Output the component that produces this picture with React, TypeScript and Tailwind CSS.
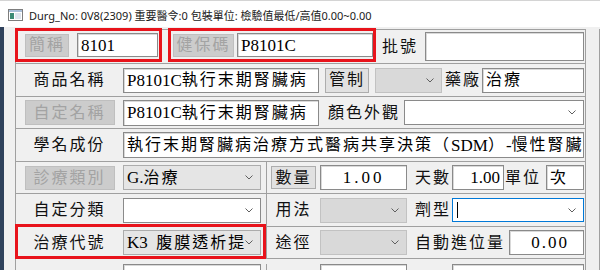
import React from 'react';

const CJK = /([\u2E80-\u9FFF\uF900-\uFAFF\uFF00-\uFFEF\u3000-\u303F]+)/;

// splits a string so CJK runs get the wide MingLiU-like pitch
function Txt({ s }: { s: string }) {
  const parts = s.split(CJK).filter(Boolean);
  return (
    <>
      {parts.map((p, i) =>
        CJK.test(p) ? (
          <span key={i} className="text-[16px] tracking-[2px]">{p}</span>
        ) : (
          <span key={i} className="text-[17px] whitespace-pre">{p}</span>
        )
      )}
    </>
  );
}

function Chevron() {
  return (
    <svg width="8" height="5" viewBox="0 0 8 5" className="shrink-0">
      <path d="M0.5 0.5 L4 4 L7.5 0.5" fill="none" stroke="#5f5f5f" strokeWidth="1" />
    </svg>
  );
}

function AppIcon() {
  return (
    <svg width="15" height="12" viewBox="0 0 15 12" className="shrink-0">
      <rect x="0.5" y="0.5" width="14" height="11" fill="#ffffff" stroke="#7d7d7d" />
      <rect x="1" y="1" width="13" height="2" fill="#a9bfd9" />
      <rect x="2" y="4" width="4" height="6" fill="#3b8b76" />
      <rect x="7" y="4" width="6" height="6" fill="#dde5ee" />
    </svg>
  );
}

function Label({ s, className = '' }: { s: string; className?: string }) {
  return <div className={`flex items-center whitespace-nowrap text-[#111] ${className}`}><Txt s={s} /></div>;
}

function Btn({ s, disabled = false, className = '' }: { s: string; disabled?: boolean; className?: string }) {
  return (
    <div
      className={`flex items-center justify-center border whitespace-nowrap ${
        disabled ? 'bg-[#cccccc] border-[#bfbfbf] text-[#a3a3a3]' : 'bg-[#e1e1e1] border-[#adadad] text-[#111]'
      } ${className}`}
    >
      <Txt s={s} />
    </div>
  );
}

function Input({ s = '', className = '' }: { s?: string; className?: string }) {
  return (
    <div
      className={`flex items-center bg-white border border-[#8a8a8a] shadow-[inset_1px_1px_0_#d9d9d9] px-[3px] overflow-hidden whitespace-nowrap ${className}`}
    >
      <Txt s={s} />
    </div>
  );
}

function Select({
  s = '',
  kind = 'white',
  className = '',
}: {
  s?: string;
  kind?: 'white' | 'gray' | 'disabled' | 'focus';
  className?: string;
}) {
  const look =
    kind === 'white'
      ? 'bg-white border-[#8a8a8a]'
      : kind === 'gray'
      ? 'bg-[#e5e5e5] border-[#acacac]'
      : kind === 'disabled'
      ? 'bg-[#d9d9d9] border-[#c2c2c2]'
      : 'bg-white border-[#0078d7]';
  return (
    <div className={`flex items-center border ${look} pl-[3px] pr-[7px] ${className}`}>
      <div className="flex-1 flex items-center overflow-hidden whitespace-nowrap">
        {kind === 'focus' ? <div className="w-px h-[16px] bg-black ml-[1px]" /> : <Txt s={s} />}
      </div>
      <Chevron />
    </div>
  );
}

const row = 'flex items-center border-b border-[#a0a0a0] shrink-0';
const redBox = 'border-[3px] border-[#e8131b]';

export default function App() {
  return (
    <div className="w-[600px] h-[270px] overflow-hidden bg-[#f0f0f0] font-['Liberation_Serif','Noto_Sans_CJK_TC',serif] text-black leading-none">
      {/* title bar */}
      <div className="h-[27px] bg-white border-t border-[#d4d4d4] flex items-center pl-[8px] pt-[2px] gap-[6px]">
        <AppIcon />
        <span className="font-['Noto_Sans','Noto_Sans_CJK_TC',sans-serif] text-[11px] text-[#1a1a1a] whitespace-nowrap">
          Durg_No: 0V8(2309) 重要醫令:0 包裝單位: 檢驗值最低/高值0.00~0.00
        </span>
      </div>

      <div className="flex h-[243px]">
        <div className="w-[15px] flex shrink-0">
          <div className="w-[4px] bg-[#2f425c]" />
        </div>

        <div className="w-[571px] shrink-0 mt-[2px] border-l border-r border-t border-[#a0a0a0] flex flex-col">
          {/* row 1 */}
          <div className={`${row} h-[34px]`}>
            <div className={`${redBox} self-start -mt-[2px] -ml-px w-[147px] h-[34px] flex items-center`}>
              <Btn s="簡稱" disabled className="ml-[7px] w-[44px] h-[23px]" />
              <Input s="8101" className="ml-[8px] w-[81px] h-[24px]" />
            </div>
            <div className={`${redBox} self-start -mt-[2px] ml-[6px] w-[208px] h-[34px] flex items-center`}>
              <Btn s="健保碼" disabled className="ml-[2px] w-[61px] h-[23px]" />
              <Input s="P8101C" className="ml-[3px] w-[136px] h-[24px]" />
            </div>
            <Label s="批號" className="ml-[6px] w-[43px]" />
            <Input className="w-[159px] h-[29px]" />
          </div>

          {/* row 2 */}
          <div className={`${row} h-[33px]`}>
            <Label s="商品名稱" className="w-[107px] justify-center" />
            <Input s="P8101C執行末期腎臟病" className="w-[196px] h-[25px]" />
            <Btn s="管制" className="ml-[6px] w-[44px] h-[25px]" />
            <Select kind="disabled" className="ml-[6px] w-[67px] h-[25px]" />
            <Label s="藥廠" className="ml-[3px] w-[37px]" />
            <Input s="治療" className="w-[102px] h-[25px]" />
          </div>

          {/* row 3 */}
          <div className={`${row} h-[32px]`}>
            <div className="w-[107px] flex justify-center">
              <Btn s="自定名稱" disabled className="w-[90px] h-[25px]" />
            </div>
            <Input s="P8101C執行末期腎臟病" className="w-[196px] h-[26px]" />
            <Label s="顏色外觀" className="ml-[9px] w-[76px]" />
            <Select className="w-[180px] h-[25px]" />
          </div>

          {/* row 4 */}
          <div className={`${row} h-[33px]`}>
            <Label s="學名成份" className="w-[107px] justify-center" />
            <Input s="執行末期腎臟病治療方式醫病共享決策（SDM）-慢性腎臟病" className="w-[461px] h-[26px]" />
          </div>

          {/* row 5 */}
          <div className={`${row} h-[32px]`}>
            <div className="w-[251px] h-full border-r border-[#a0a0a0] flex items-center">
              <div className="w-[107px] flex justify-center">
                <Btn s="診療類別" disabled className="w-[90px] h-[24px]" />
              </div>
              <Select s="G.治療" kind="gray" className="w-[138px] h-[25px]" />
            </div>
            <div className="w-[53px] flex justify-center">
              <Btn s="數量" className="w-[45px] h-[23px]" />
            </div>
            <Input s="1.00" className="w-[87px] h-[25px] justify-center tracking-[3px]" />
            <Label s="天數" className="ml-[8px] w-[37px]" />
            <Input s="1.00" className="w-[52px] h-[25px] justify-end" />
            <Label s="單位" className="ml-[1px] w-[41px]" />
            <Input s="次" className="w-[38px] h-[25px]" />
          </div>

          {/* row 6 */}
          <div className={`${row} h-[33px]`}>
            <div className="w-[251px] h-full border-r border-[#a0a0a0] flex items-center">
              <Label s="自定分類" className="w-[107px] justify-center" />
              <Select className="w-[138px] h-[25px]" />
            </div>
            <Label s="用法" className="w-[53px] justify-center" />
            <Select kind="disabled" className="w-[87px] h-[25px]" />
            <Label s="劑型" className="ml-[8px] w-[37px]" />
            <Select kind="focus" className="w-[132px] h-[24px]" />
          </div>

          {/* row 7 */}
          <div className={`${row} h-[32px]`}>
            <div className="relative w-[251px] h-full border-r border-[#a0a0a0] flex items-center">
              <Label s="治療代號" className="w-[107px] justify-center" />
              <Select s="K3  腹膜透析提供" kind="gray" className="w-[138px] h-[25px]" />
              <div className={`absolute -left-px -top-[3px] w-[251px] h-[35px] ${redBox} pointer-events-none`} />
            </div>
            <Label s="途徑" className="w-[53px] justify-center" />
            <Select kind="disabled" className="w-[87px] h-[25px]" />
            <Label s="自動進位量" className="ml-[8px] w-[94px]" />
            <Input s="0.00" className="w-[75px] h-[25px] justify-end pr-[14px] tracking-[2px]" />
          </div>

          {/* row 8 (cut off) */}
          <div className="flex items-start pt-[5px] flex-1">
            <div className="w-[251px] h-full border-r border-[#a0a0a0] flex items-start">
              <Label s="單次劑量" className="w-[107px] justify-center pt-[7px]" />
              <Input className="w-[138px] h-[25px]" />
            </div>
            <Label s="頻率" className="w-[53px] justify-center pt-[7px]" />
            <Input s="1.00" className="w-[87px] h-[25px] justify-center tracking-[2px]" />
            <Label s="總量" className="ml-[8px] w-[37px] pt-[7px]" />
            <Input s="0.00" className="w-[132px] h-[25px] justify-center tracking-[2px]" />
          </div>
        </div>

        <div className="w-[14px] shrink-0 flex justify-end mt-[2px]">
          <div className="w-px bg-[#a0a0a0]" />
        </div>
      </div>
    </div>
  );
}
